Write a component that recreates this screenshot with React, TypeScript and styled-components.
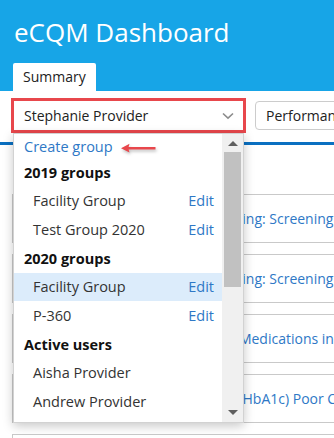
import styled, { createGlobalStyle } from "styled-components";

const GlobalStyle = createGlobalStyle`
  html, body {
    margin: 0;
    padding: 0;
    background: #fff;
    overflow: hidden;
  }
  body {
    font-family: "Open Sans", "Noto Sans", sans-serif;
  }
`;

type MenuRow = {
  label: string;
  kind: "link" | "heading" | "option";
  edit?: boolean;
  active?: boolean;
};

const menu: MenuRow[] = [
  { label: "Create group", kind: "link" },
  { label: "2019 groups", kind: "heading" },
  { label: "Facility Group", kind: "option", edit: true },
  { label: "Test Group 2020", kind: "option", edit: true },
  { label: "2020 groups", kind: "heading" },
  { label: "Facility Group", kind: "option", edit: true, active: true },
  { label: "P-360", kind: "option", edit: true },
  { label: "Active users", kind: "heading" },
  { label: "Aisha Provider", kind: "option" },
  { label: "Andrew Provider", kind: "option" },
];

const measures = [
  "Preventive Care and Screening: Screening for Depression and Follow-Up Plan",
  "Preventive Care and Screening: Screening for High Blood Pressure",
  "Documentation of Current Medications in the Medical Record",
  "Diabetes: Hemoglobin A1c (HbA1c) Poor Control (> 9%)",
  "Controlling High Blood Pressure",
];

const App = () => {
  return (
    <Page>
      <GlobalStyle />
      <Header>
        <Title>eCQM Dashboard</Title>
        <Tab>Summary</Tab>
      </Header>

      <Toolbar>
        <SelectBox>
          <SelectText>Stephanie Provider</SelectText>
          <Chevron width="12" height="8" viewBox="0 0 12 8">
            <path d="M1 1.5 L6 6.2 L11 1.5" fill="none" stroke="#8c8c8c" strokeWidth="1.6" />
          </Chevron>

          <Dropdown>
            <MenuList>
              {menu.map((row, i) => (
                <MenuItem key={i} $kind={row.kind} $active={row.active}>
                  <span>{row.label}</span>
                  {row.edit && <EditLink>Edit</EditLink>}
                </MenuItem>
              ))}
            </MenuList>
            <ScrollTrack>
              <ArrowCell>
                <ArrowUp />
              </ArrowCell>
              <ScrollThumb />
              <ArrowCell $bottom>
                <ArrowDown />
              </ArrowCell>
            </ScrollTrack>

            <Pointer width="38" height="12" viewBox="0 0 38 12">
              <path
                d="M1 5.2 L9.5 0.8 L8.6 4 L35.5 3.9 L35.5 6.6 L8.6 6.6 L9.5 9.6 Z"
                fill="#e8474c"
              />
            </Pointer>
          </Dropdown>
        </SelectBox>

        <OtherSelect>Performance period</OtherSelect>
      </Toolbar>

      <Underline />

      <CardList>
        {measures.map((m, i) => (
          <Card key={i}>
            <CardTitle>{m}</CardTitle>
          </Card>
        ))}
      </CardList>
    </Page>
  );
};

export default App;

const Page = styled.div`
  width: 334px;
  height: 438px;
  overflow: hidden;
  position: relative;
`;

const Header = styled.div`
  height: 91px;
  box-sizing: border-box;
  background: #17a5e7;
  padding-left: 13px;
  display: flex;
  flex-direction: column;
`;

const Title = styled.div`
  padding-top: 16px;
  margin-left: 1px;
  font-size: 26px;
  line-height: 32px;
  color: #fff;
`;

const Tab = styled.div`
  margin-top: auto;
  align-self: flex-start;
  height: 28px;
  line-height: 28px;
  padding: 0 10px;
  background: #fff;
  border-radius: 2px 2px 0 0;
  font-size: 14px;
  color: #222;
`;

const Toolbar = styled.div`
  display: flex;
  align-items: center;
  gap: 9px;
  padding: 7px 0 0 11px;
`;

const SelectBox = styled.div`
  position: relative;
  flex: none;
  width: 235px;
  height: 35px;
  box-sizing: border-box;
  border: 3px solid #e8474c;
  display: flex;
  align-items: center;
  justify-content: space-between;
  padding: 0 9px 0 10px;
  background: #fff;
`;

const SelectText = styled.span`
  font-size: 14px;
  color: #222;
`;

const Chevron = styled.svg`
  display: block;
`;

const OtherSelect = styled.div`
  flex: none;
  width: 200px;
  height: 29px;
  box-sizing: border-box;
  border: 1px solid #cccccc;
  border-radius: 4px;
  padding-left: 10px;
  line-height: 27px;
  font-size: 14px;
  color: #222;
  white-space: nowrap;
`;

const Underline = styled.div`
  margin-top: 9px;
  height: 3px;
  background: #0a70c1;
`;

const CardList = styled.div`
  margin: 49px 0 0 12px;
  display: flex;
  flex-direction: column;
  gap: 11px;
`;

const Card = styled.div`
  height: 49px;
  width: 360px;
  box-sizing: border-box;
  border: 1px solid #c9c9c9;
  display: flex;
  align-items: center;
  padding-left: 50px;
  overflow: hidden;
`;

const CardTitle = styled.span`
  font-size: 14px;
  color: #2e78c6;
  white-space: nowrap;
`;

const Dropdown = styled.div`
  position: absolute;
  top: calc(100% + 3px);
  left: -1px;
  width: 231px;
  height: 290px;
  box-sizing: border-box;
  border: 1px solid #d2d2d2;
  background: #fff;
  box-shadow: 0 3px 10px rgba(0, 0, 0, 0.22);
  display: flex;
  z-index: 5;
`;

const MenuList = styled.div`
  flex: 1;
  display: flex;
  flex-direction: column;
  overflow: hidden;
`;

const MenuItem = styled.div<{ $kind: "link" | "heading" | "option"; $active?: boolean }>`
  flex: none;
  display: flex;
  align-items: center;
  justify-content: space-between;
  height: ${(p) => (p.$kind === "link" ? "24px" : "28.67px")};
  padding: 0 8px 0 ${(p) => (p.$kind === "option" ? "19px" : "10px")};
  font-size: 14.5px;
  font-weight: ${(p) => (p.$kind === "heading" ? 700 : 400)};
  color: ${(p) => (p.$kind === "link" ? "#2e78c6" : p.$kind === "heading" ? "#111" : "#333")};
  background: ${(p) => (p.$active ? "#dcecfb" : "transparent")};
  white-space: nowrap;
`;

const EditLink = styled.span`
  color: #2e78c6;
  font-weight: 400;
`;

const ScrollTrack = styled.div`
  flex: none;
  width: 21px;
  background: #f0f0f0;
  display: flex;
  flex-direction: column;
  padding: 0 2px;
  box-sizing: border-box;
`;

const ArrowCell = styled.div<{ $bottom?: boolean }>`
  height: ${(p) => (p.$bottom ? "20px" : "18px")};
  margin-top: ${(p) => (p.$bottom ? "auto" : "0")};
  display: flex;
  align-items: center;
  justify-content: center;
`;

const ArrowUp = styled.div`
  width: 0;
  height: 0;
  border-left: 5px solid transparent;
  border-right: 5px solid transparent;
  border-bottom: 5px solid #5f5f5f;
`;

const ArrowDown = styled.div`
  width: 0;
  height: 0;
  border-left: 5px solid transparent;
  border-right: 5px solid transparent;
  border-top: 5px solid #5f5f5f;
`;

const ScrollThumb = styled.div`
  height: 135px;
  background: #c1c1c1;
`;

const Pointer = styled.svg`
  position: absolute;
  left: 106px;
  top: 9px;
  filter: drop-shadow(1px 2px 1.5px rgba(0, 0, 0, 0.25));
`;
